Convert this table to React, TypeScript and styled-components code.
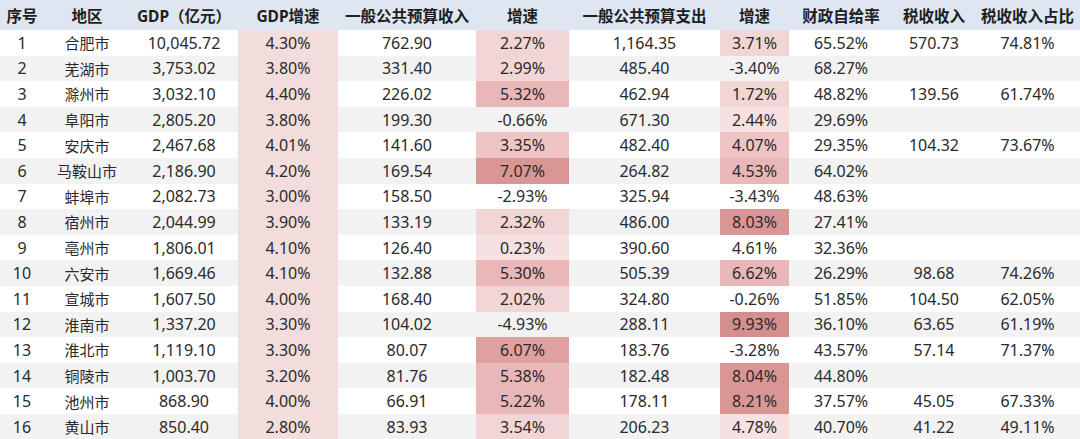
import React from "react";
import styled, { createGlobalStyle } from "styled-components";

const GlobalStyle = createGlobalStyle`
  html, body { margin: 0; padding: 0; background: #ffffff; }
  body { font-family: "Noto Sans", "Noto Sans CJK SC", sans-serif; }
`;

const COLS = "44px 86px 108px 100px 138px 93px 151px 69px 104px 82px 105px";

const Table = styled.div`
  width: 1080px;
  display: flex;
  flex-direction: column;
  font-family: "Noto Sans", "Noto Sans CJK SC", sans-serif;
`;

const HeaderRow = styled.div`
  display: grid;
  grid-template-columns: ${COLS};
  height: 30px;
  background: #dde6f1;
`;

const HeaderCell = styled.div`
  display: flex;
  align-items: center;
  justify-content: center;
  font-size: 15.5px;
  font-weight: 700;
  color: #1e1e1e;
  white-space: nowrap;
`;

const Row = styled.div<{ $alt: boolean }>`
  display: grid;
  grid-template-columns: ${COLS};
  height: 25.6px;
  background: ${(p) => (p.$alt ? "#f2f2f2" : "#ffffff")};
`;

const Cell = styled.div<{ $heat?: string; $cjk?: boolean }>`
  display: flex;
  align-items: center;
  justify-content: center;
  font-size: ${(p) => (p.$cjk ? "15px" : "16px")};
  color: #2a2a2a;
  white-space: nowrap;
  background: ${(p) => p.$heat ?? "transparent"};
`;

const GDP_PINK = "#f2dcdc";
const L1 = "#f5e1e1";
const L2 = "#f2d6d6";
const M1 = "#eec4c4";
const M2 = "#e9b7b7";
const D1 = "#dea0a0";
const D2 = "#d99695";
const D3 = "#d48e8d";

type R = {
  n: number;
  city: string;
  gdp: string;
  gdpG: string;
  inc: string;
  incG: string;
  incH?: string;
  exp: string;
  expG: string;
  expH?: string;
  self: string;
  tax: string;
  taxR: string;
};

const rows: R[] = [
  { n: 1, city: "合肥市", gdp: "10,045.72", gdpG: "4.30%", inc: "762.90", incG: "2.27%", incH: L2, exp: "1,164.35", expG: "3.71%", expH: L2, self: "65.52%", tax: "570.73", taxR: "74.81%" },
  { n: 2, city: "芜湖市", gdp: "3,753.02", gdpG: "3.80%", inc: "331.40", incG: "2.99%", incH: L2, exp: "485.40", expG: "-3.40%", self: "68.27%", tax: "", taxR: "" },
  { n: 3, city: "滁州市", gdp: "3,032.10", gdpG: "4.40%", inc: "226.02", incG: "5.32%", incH: M2, exp: "462.94", expG: "1.72%", expH: L2, self: "48.82%", tax: "139.56", taxR: "61.74%" },
  { n: 4, city: "阜阳市", gdp: "2,805.20", gdpG: "3.80%", inc: "199.30", incG: "-0.66%", exp: "671.30", expG: "2.44%", expH: L1, self: "29.69%", tax: "", taxR: "" },
  { n: 5, city: "安庆市", gdp: "2,467.68", gdpG: "4.01%", inc: "141.60", incG: "3.35%", incH: M1, exp: "482.40", expG: "4.07%", expH: M1, self: "29.35%", tax: "104.32", taxR: "73.67%" },
  { n: 6, city: "马鞍山市", gdp: "2,186.90", gdpG: "4.20%", inc: "169.54", incG: "7.07%", incH: D2, exp: "264.82", expG: "4.53%", expH: M2, self: "64.02%", tax: "", taxR: "" },
  { n: 7, city: "蚌埠市", gdp: "2,082.73", gdpG: "3.00%", inc: "158.50", incG: "-2.93%", exp: "325.94", expG: "-3.43%", self: "48.63%", tax: "", taxR: "" },
  { n: 8, city: "宿州市", gdp: "2,044.99", gdpG: "3.90%", inc: "133.19", incG: "2.32%", incH: L2, exp: "486.00", expG: "8.03%", expH: D2, self: "27.41%", tax: "", taxR: "" },
  { n: 9, city: "亳州市", gdp: "1,806.01", gdpG: "4.10%", inc: "126.40", incG: "0.23%", incH: L1, exp: "390.60", expG: "4.61%", self: "32.36%", tax: "", taxR: "" },
  { n: 10, city: "六安市", gdp: "1,669.46", gdpG: "4.10%", inc: "132.88", incG: "5.30%", incH: M2, exp: "505.39", expG: "6.62%", expH: M2, self: "26.29%", tax: "98.68", taxR: "74.26%" },
  { n: 11, city: "宣城市", gdp: "1,607.50", gdpG: "4.00%", inc: "168.40", incG: "2.02%", incH: L2, exp: "324.80", expG: "-0.26%", self: "51.85%", tax: "104.50", taxR: "62.05%" },
  { n: 12, city: "淮南市", gdp: "1,337.20", gdpG: "3.30%", inc: "104.02", incG: "-4.93%", exp: "288.11", expG: "9.93%", expH: D3, self: "36.10%", tax: "63.65", taxR: "61.19%" },
  { n: 13, city: "淮北市", gdp: "1,119.10", gdpG: "3.30%", inc: "80.07", incG: "6.07%", incH: D1, exp: "183.76", expG: "-3.28%", self: "43.57%", tax: "57.14", taxR: "71.37%" },
  { n: 14, city: "铜陵市", gdp: "1,003.70", gdpG: "3.20%", inc: "81.76", incG: "5.38%", incH: M2, exp: "182.48", expG: "8.04%", expH: D2, self: "44.80%", tax: "", taxR: "" },
  { n: 15, city: "池州市", gdp: "868.90", gdpG: "4.00%", inc: "66.91", incG: "5.22%", incH: M2, exp: "178.11", expG: "8.21%", expH: D2, self: "37.57%", tax: "45.05", taxR: "67.33%" },
  { n: 16, city: "黄山市", gdp: "850.40", gdpG: "2.80%", inc: "83.93", incG: "3.54%", incH: L2, exp: "206.23", expG: "4.78%", expH: L1, self: "40.70%", tax: "41.22", taxR: "49.11%" },
];

const headers = [
  "序号",
  "地区",
  "GDP（亿元）",
  "GDP增速",
  "一般公共预算收入",
  "增速",
  "一般公共预算支出",
  "增速",
  "财政自给率",
  "税收收入",
  "税收收入占比",
];

export default function App() {
  return (
    <>
      <GlobalStyle />
      <Table>
        <HeaderRow>
          {headers.map((h, i) => (
            <HeaderCell key={i}>{h}</HeaderCell>
          ))}
        </HeaderRow>
        {rows.map((r, i) => (
          <Row key={r.n} $alt={i % 2 === 1}>
            <Cell>{r.n}</Cell>
            <Cell $cjk>{r.city}</Cell>
            <Cell>{r.gdp}</Cell>
            <Cell $heat={GDP_PINK}>{r.gdpG}</Cell>
            <Cell>{r.inc}</Cell>
            <Cell $heat={r.incH}>{r.incG}</Cell>
            <Cell>{r.exp}</Cell>
            <Cell $heat={r.expH}>{r.expG}</Cell>
            <Cell>{r.self}</Cell>
            <Cell>{r.tax}</Cell>
            <Cell>{r.taxR}</Cell>
          </Row>
        ))}
      </Table>
    </>
  );
}
